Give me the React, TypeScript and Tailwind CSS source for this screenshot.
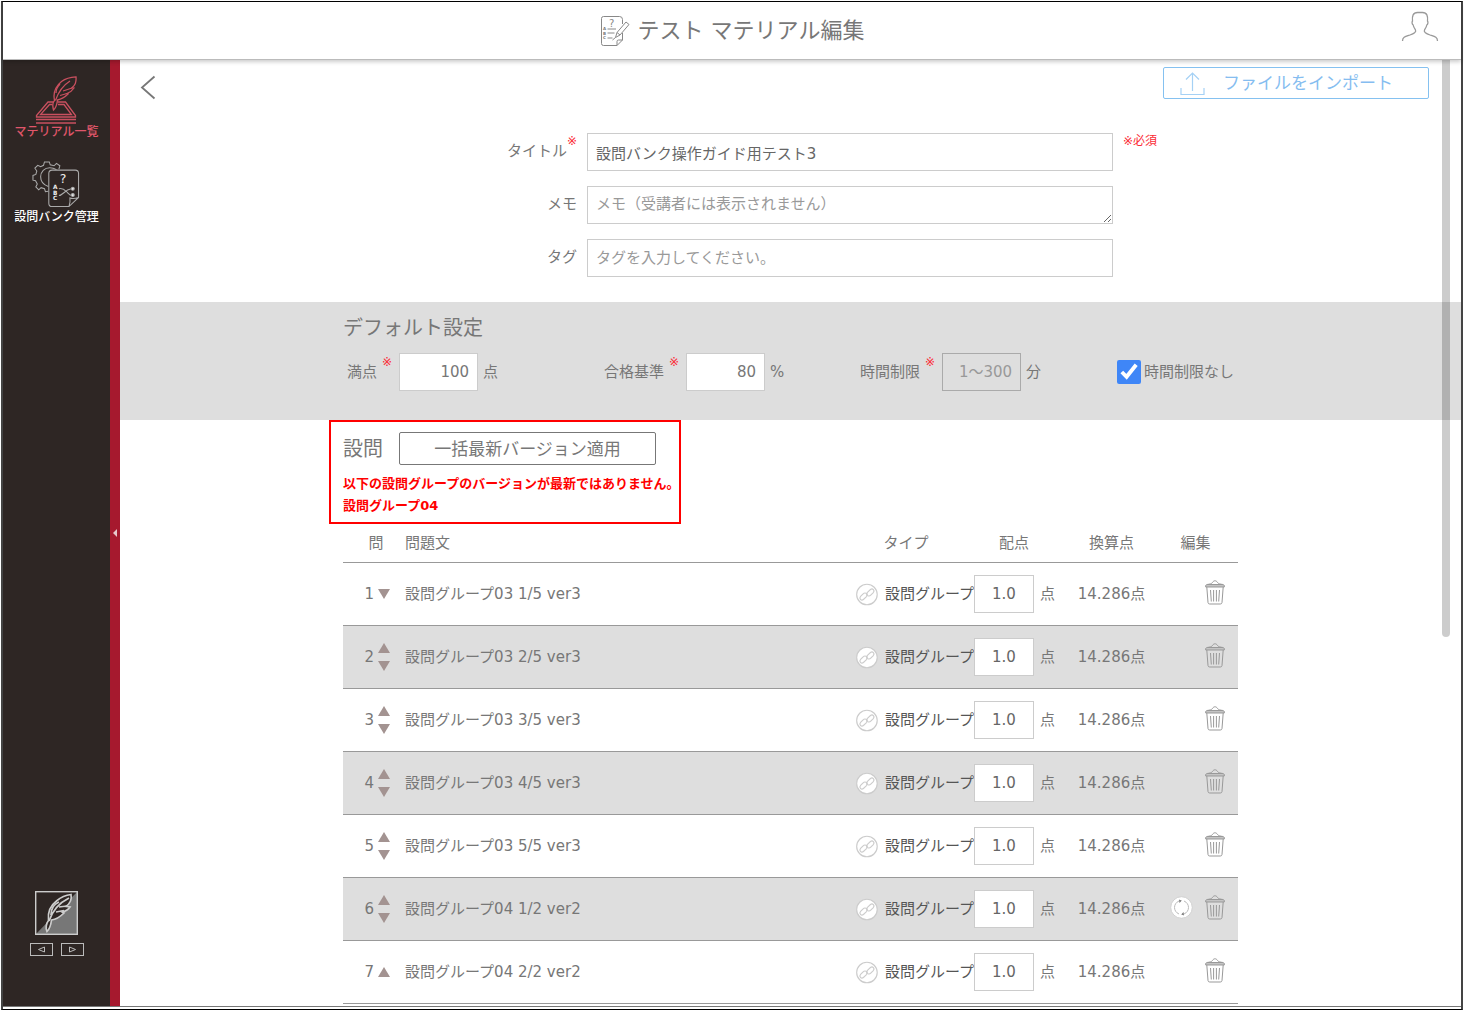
import { useState } from "react";

type Question = {
    no: number;
    text: string;
    outdated?: boolean;
}

const initialQuestions: Question[] = [
    { no: 1, text: "設問グループ03 1/5 ver3" },
    { no: 2, text: "設問グループ03 2/5 ver3" },
    { no: 3, text: "設問グループ03 3/5 ver3" },
    { no: 4, text: "設問グループ03 4/5 ver3" },
    { no: 5, text: "設問グループ03 5/5 ver3" },
    { no: 6, text: "設問グループ04 1/2 ver2", outdated: true },
    { no: 7, text: "設問グループ04 2/2 ver2" },
];

const fieldClass = "h-[38px] border border-[#ccc] bg-white text-[15px] leading-5 text-[#666] placeholder:text-[#999]";

export default function App() {
    return (
        <div className="min-h-screen flex bg-white p-px font-['DejaVu_Sans','Noto_Sans_CJK_JP',sans-serif] text-[15px] leading-5 text-[#777]">
            <div className="flex-1 flex flex-col border-y border-y-black border-x-2 border-x-[#444] pb-0.5">
                <div className="flex-1 flex flex-col border-b border-[#777]">
                    <Header />
                    <div className="flex-1 flex">
                        <Sidebar />
                        <main className="relative flex-1 min-w-0">
                            <Toolbar />
                            <MaterialForm />
                            <DefaultSettings />
                            <Questions />
                            <div className="absolute top-0 right-[11px] w-2 h-[61%] rounded-b bg-black/20" />
                        </main>
                    </div>
                </div>
            </div>
        </div>
    )
}

function Header() {
    return (
        <header className="relative z-10 h-[58px] flex items-center justify-center bg-white border-b border-[#bbb] shadow-[0_2px_4px_rgba(0,0,0,0.2)]">
            <h1 className="flex items-center gap-2 text-[22px] leading-8">
                <TestIcon />
                テスト マテリアル編集
            </h1>
            <button aria-label="アカウント" className="absolute right-[22px] top-1.5">
                <UserIcon />
            </button>
        </header>
    )
}

function Sidebar() {
    return (
        <aside className="flex">
            <div className="w-[107px] flex flex-col items-center bg-[#2e2624] pt-4 pb-[50px]">
                <nav className="flex flex-col items-center gap-5 text-[12px] leading-4">
                    <a href="#materials" className="flex flex-col items-center font-medium text-[#e0566a]">
                        <QuillTrayIcon />
                        マテリアル一覧
                    </a>
                    <a href="#bank" className="flex flex-col items-center font-medium text-white">
                        <BankIcon />
                        設問バンク管理
                    </a>
                </nav>
                <div className="mt-auto flex flex-col items-center gap-2">
                    <QuillBadge />
                    <div className="flex gap-2">
                        <button aria-label="前へ" className="w-[23px] h-[13px] flex items-center justify-center border border-[#bbb]">
                            <svg width="9" height="7" viewBox="0 0 9 7" fill="none" stroke="#bbb"><path d="M7.5 1v5L1.5 3.5z" /></svg>
                        </button>
                        <button aria-label="次へ" className="w-[23px] h-[13px] flex items-center justify-center border border-[#bbb]">
                            <svg width="9" height="7" viewBox="0 0 9 7" fill="none" stroke="#bbb"><path d="M1.5 1v5L7.5 3.5z" /></svg>
                        </button>
                    </div>
                </div>
            </div>
            <button aria-label="メニューを閉じる" className="w-2.5 flex items-center justify-center bg-[#a6192e]">
                <svg width="4" height="8" viewBox="0 0 4 8" fill="#e8c8cc"><path d="M4 0v8L0 4z" /></svg>
            </button>
        </aside>
    )
}

function Toolbar() {
    return (
        <div className="h-[73px] flex items-start justify-between pt-[7px] pl-5 pr-8">
            <button aria-label="戻る" className="mt-2">
                <svg width="16" height="25" viewBox="0 0 16 25" fill="none" stroke="#777" strokeWidth="1.8"><path d="M14.5 1.5L2 12.5l12.5 11" /></svg>
            </button>
            <button className="w-[266px] h-8 flex items-center rounded-xs border border-[#85c1f0] pl-4 text-[17px] text-[#85bdf0]">
                <svg width="25" height="25" viewBox="0 0 25 25" fill="none" stroke="#a5d1f5" strokeWidth="1.2">
                    <path d="M12.5 20V2M6 8.5L12.500 2 19 8.500M1 17v6.500h23V17" />
                </svg>
                <span className="pl-[18px]">ファイルをインポート</span>
            </button>
        </div>
    )
}

function MaterialForm() {
    const [title, setTitle] = useState<string>("設問バンク操作ガイド用テスト3");

    return (
        <form className="w-[895px] mx-auto grid grid-cols-[234px_526px_auto] gap-x-2.5 gap-y-[15px] pb-[25px]">
            <label htmlFor="title" className="flex justify-end pt-2">
                タイトル<RequiredMark />
            </label>
            <input id="title" value={title} onChange={e => setTitle(e.target.value)} className={`${fieldClass} px-2`} />
            <span className="text-[12px] leading-4 text-red-500">※必須</span>

            <label htmlFor="memo" className="pt-2 text-right">メモ</label>
            <textarea id="memo" placeholder="メモ（受講者には表示されません）" className={`${fieldClass} px-2 py-[7px] resize overflow-hidden`} />
            <span />

            <label htmlFor="tag" className="pt-2 text-right">タグ</label>
            <input id="tag" placeholder="タグを入力してください。" className={`${fieldClass} px-2`} />
        </form>
    )
}

function RequiredMark() {
    return <sup className="top-0 -mt-2 self-start text-[12px] leading-4 text-red-500">※</sup>
}

function DefaultSettings() {
    return (
        <section className="h-[118px] bg-[#dedede] pt-3">
            <div className="w-[895px] mx-auto">
                <h2 className="text-[20px] leading-7">デフォルト設定</h2>
                <div className="mt-[11px] pl-1 grid grid-cols-[257px_256px_257px_auto]">
                    <ScoreField id="full" label="満点" unit="点" value="100" />
                    <ScoreField id="pass" label="合格基準" unit="%" value="80" />
                    <ScoreField id="limit" label="時間制限" unit="分" placeholder="1〜300" disabled />
                    <label className="flex items-center gap-[3px] whitespace-nowrap">
                        <input type="checkbox" defaultChecked className="size-6 accent-[#3f86f7]" />
                        時間制限なし
                    </label>
                </div>
            </div>
        </section>
    )
}

type ScoreFieldProps = { id: string, label: string, unit: string, value?: string, placeholder?: string, disabled?: boolean }

function ScoreField({ id, label, unit, value, placeholder, disabled }: ScoreFieldProps) {
    return (
        <div className="flex items-center">
            <label htmlFor={id} className="flex gap-[5px] pr-[7px]">{label}<RequiredMark /></label>
            <input
                id={id}
                defaultValue={value}
                placeholder={placeholder}
                disabled={disabled}
                className="w-[79px] h-[38px] border border-[#ccc] bg-white px-2 text-right text-[#777] placeholder:text-[#999] disabled:border-[#aaa] disabled:bg-transparent"
            />
            <span className="pl-[5px]">{unit}</span>
        </div>
    )
}

function Questions() {
    return (
        <section className="w-[895px] mx-auto">
            <div className="w-[352px] h-[104px] -ml-3.5 border-2 border-[#f00] pt-2.5 pl-3">
                <div className="flex items-center gap-4">
                    <h2 className="text-[20px] leading-7">設問</h2>
                    <button className="w-[257px] h-[33px] rounded-xs border border-[#777] text-[17px]">一括最新バージョン適用</button>
                </div>
                <p className="mt-2 whitespace-nowrap text-[13px] leading-[22px] font-bold text-[#f00]">
                    以下の設問グループのバージョンが最新ではありません。<br />
                    設問グループ04
                </p>
            </div>
            <table className="w-full table-fixed border-separate border-spacing-0">
                <colgroup>
                    <col className="w-[62px]" />
                    <col />
                    <col className="w-[118px]" />
                    <col className="w-[92px]" />
                    <col className="w-[91px]" />
                    <col className="w-[81px]" />
                </colgroup>
                <thead>
                    <tr className="h-[39px] *:border-b *:border-[#999] *:p-0 *:font-normal">
                        <th><span className="pl-1">問</span></th>
                        <th className="text-left">問題文</th>
                        <th><span className="pr-[18px]">タイプ</span></th>
                        <th><span className="pr-3">配点</span></th>
                        <th>換算点</th>
                        <th><span className="pr-1">編集</span></th>
                    </tr>
                </thead>
                <tbody>
                    {initialQuestions.map(question => (
                        <QuestionRow key={question.no} question={question} isLast={question.no === initialQuestions.length} />
                    ))}
                </tbody>
            </table>
        </section>
    )
}

function QuestionRow({ question, isLast }: { question: Question, isLast: boolean }) {
    const { no, text, outdated } = question;

    return (
        <tr className="h-[63px] even:bg-[#dedede] *:border-b *:border-[#999] *:p-0">
            <td>
                <div className="flex items-center justify-end gap-1 pr-[15px]">
                    {no}
                    <span className="flex flex-col gap-2">
                        {no > 1 && <MoveButton direction="up" />}
                        {!isLast && <MoveButton direction="down" />}
                    </span>
                </div>
            </td>
            <td>{text}</td>
            <td>
                <div className="flex items-center gap-[7px] whitespace-nowrap text-[#555]">
                    <LinkIcon />
                    設問グループ
                </div>
            </td>
            <td>
                <div className="flex items-center gap-1.5">
                    <input aria-label={`配点 ${no}`} defaultValue="1.0" className={`${fieldClass} w-[60px] text-center`} />
                    点
                </div>
            </td>
            <td className="text-center">14.286点</td>
            <td>
                <div className="flex items-center justify-end gap-3 pr-[13px] pb-1">
                    {outdated && <button aria-label="最新バージョン適用"><RefreshIcon /></button>}
                    <button aria-label="削除"><TrashIcon /></button>
                </div>
            </td>
        </tr>
    )
}

function MoveButton({ direction }: { direction: "up" | "down" }) {
    return (
        <button aria-label={direction === "up" ? "上へ" : "下へ"}>
            <svg className="block" width="12" height="10" viewBox="0 0 12 10" fill="#a39391">
                <path d={direction === "up" ? "M6 0l6 10H0z" : "M0 0h12L6 10z"} />
            </svg>
        </button>
    )
}

function TestIcon() {
    return (
        <svg width="30" height="32" viewBox="0 0 30 32" fill="none" stroke="#888" strokeWidth="1">
            <path d="M22.500 9V4.500q0-3-3-3h-16q-2 0-2 2v25q0 2 2 2H17l5.500-5.500v-7" />
            <path d="M17 30.500v-4q0-1.500 1.500-1.500h4M15.500 22.500l1.500-5L26 7l3 2.500-9 10.500zM17 17.500l3 2.500M15.500 22.500l-3 2.500M7.500 14H16M7.500 18h7M7.500 23h5" />
            <text x="9" y="11.500" fontSize="10" fill="#888" stroke="none">?</text>
            <g fill="#777" stroke="none" fontSize="4" fontWeight="700">
                <text x="3" y="15">A</text>
                <text x="3" y="19.500">B</text>
                <text x="3" y="24">C</text>
            </g>
        </svg>
    )
}

function UserIcon() {
    return (
        <svg width="38" height="34" viewBox="0 0 38 34" fill="none" stroke="#999" strokeWidth="1.3">
            <path d="M1.500 33c0-4 3-4.500 7.500-6 4-1.300 6.500-3 5.500-5-1.300-2-2-3-2.300-5-1.200-.5-1.500-3-.7-4-.5-5 .5-8.500 5-8.500h5c4.500 0 5.500 3.500 5 8.500.8 1 .5 3.500-.7 4-.3 2-1 3-2.300 5-1 2 1.500 3.700 5.500 5 4.500 1.500 7.500 2 7.500 6" />
        </svg>
    )
}

function QuillTrayIcon() {
    return (
        <svg width="42" height="48" viewBox="0 0 42 48" fill="none" stroke="#c9505f" strokeWidth="1.300">
            <path d="M18.500 26H13L1.500 39.500v1.500h39v-1.500L30.500 26h-8" />
            <path d="M17.500 28.500h-3L5.500 38.500h31L29 28.500h-6M1 43.500h40M1 47h40" />
            <path d="M18.500 34c-1-4-.8-8 1-9.500-1.500-7 1-14 7-19C31 2 36 1 41 .8c.5 6-1 8-4 11l2 .2c-2 3-4 4.500-7 5.500l1 .5c-2.500 2.500-5.500 5-10.500 6-.5 4-1.500 8-4 10z" />
            <path d="M20.500 24.500C23 17 27 10 35 5M28 15l9-3M25 19.500l7-2M21 17c0-4 2-7 4-9" />
        </svg>
    )
}

function BankIcon() {
    return (
        <svg width="48" height="49" viewBox="0 0 50 49" fill="none" stroke="#aaa" strokeWidth="1.100">
            <path d="M17 31.500l-3 .5-1-3.200-3.500-1L7 30l-3-3 1.500-3-1.800-3.500L1 20v-5l3-1 1-3.500-2-3 3-3L9 6l3-1.500L13 1h5l1 3 4 1 2.500-2.500L29 5l-1 3.500" />
            <path d="M17 26.500c-5-1.500-8-5-8-10 0-5.500 4-9.500 9.500-9.500 3 0 5 .8 7 2" />
            <path d="M21 9.500h24q3.500 0 3.500 3.500v25L38.500 47.500H21q-3.500 0-3.500-3.500V13q0-3.500 3.500-3.500zM38.500 47.500c1-3 1.500-6 1-9 3 1 6 .5 9-.5M28 29c3-1 5.500.5 8 3s3 4 6 4M28 36c4 0 6-6 13-7" />
            <circle cx="42.500" cy="29" r="1.500" fill="#eee" />
            <circle cx="42.500" cy="35.500" r="1.500" fill="#eee" />
            <g fill="#eee" stroke="none" fontWeight="700">
                <text x="29" y="22.500" fontSize="13" fontWeight="400">?</text>
                <text x="22" y="29" fontSize="6">A</text>
                <text x="22" y="35" fontSize="6">B</text>
                <text x="22" y="41" fontSize="6">C</text>
            </g>
        </svg>
    )
}

function QuillBadge() {
    return (
        <svg width="43" height="44" viewBox="0 0 43 44" fill="none" stroke="#ccc">
            <path d="M43 0v44H0z" fill="#777" stroke="none" />
            <rect x=".7" y=".7" width="41.600" height="42.600" strokeWidth="1.400" />
            <path d="M12 40.500c-1.500-3-1-8 1.500-11-1-8 2-15 8-19.500 4-3.500 9-6 14.500-6.500 1 5-1 9-5 12l4 .5c-2 3-5 4.500-8 5l2 1c-4 4-8 6.500-12.500 7-.5 4-1.500 8.500-4.500 11.500z" fill="#2e2624" strokeWidth="1.700" />
            <path d="M14 30C17 21 24 12 34 7M16 24c0-6 3-11 8-13" strokeWidth="1.800" />
            <path d="M21 21l8-1.500M24 16l8-1" strokeWidth="1.400" />
        </svg>
    )
}

function LinkIcon() {
    return (
        <svg width="23" height="23" viewBox="0 0 23 23" fill="none" stroke="#ccc" strokeWidth="1.200" strokeLinecap="round">
            <circle cx="11.500" cy="11.500" r="10.800" fill="#fff" />
            <path d="M10.500 10.200c-1.200-.5-2.200-.2-3 .6L4.800 13.500c-2 2.200.8 5 3 3.200l3.200-3c1-1 1.100-2.200.5-3.100" />
            <path d="M12.500 12.800c1.200.5 2.200.2 3-.6l2.700-2.700c2-2.200-.8-5-3-3.200l-3.200 3c-1 1-1.100 2.200-.5 3.100" />
        </svg>
    )
}

function RefreshIcon() {
    return (
        <svg className="block" width="23" height="23" viewBox="0 0 23 23" fill="none" stroke="#bbb">
            <circle cx="11.500" cy="11.500" r="10.800" fill="#fff" stroke="#d0d0d0" />
            <path d="M9 5C3 7.500 3 15.500 9 18M14 18c6-2.500 6-10.500 0-13M10 4.500h1.500M11.500 18.500H13" />
            <path d="M9 3.500l2.500 1.300L9.500 7zM14 19.500l-2.500-1.300 2-2.200z" fill="#777" stroke="none" />
        </svg>
    )
}

function TrashIcon() {
    return (
        <svg className="block" width="20" height="25" viewBox="0 0 20 25" fill="none" stroke="#999" strokeWidth="1">
            <path d="M2 4.500c3-.3 4.500-.8 5.500-2 .8-1.300 1.500-1.700 2.500-1.700s1.700.4 2.500 1.700c1 1.200 2.500 1.700 5.500 2" />
            <path d="M.700 7V5.500q.3-1 2-1h14.600q1.700 0 2 1V7z" fill="#c4c4c4" />
            <path d="M1.800 7l1.200 15.500q.2 1.500 1.700 1.500h10.600q1.500 0 1.700-1.500L18.200 7" />
            <path d="M5.500 10l.8 11.500M8.600 10v11.500M11.400 10v11.500M14.500 10l-.8 11.500" />
        </svg>
    )
}
